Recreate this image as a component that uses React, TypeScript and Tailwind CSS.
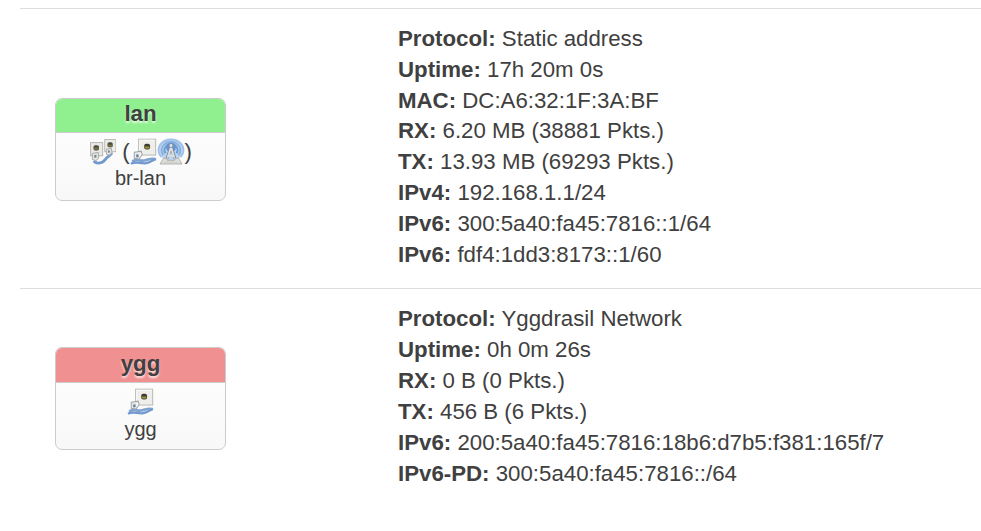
import type { ReactNode } from "react";

const iconClass = "inline-block h-[27.4px] w-[27.4px] shrink-0";

function BridgeIcon() {
  return (
    <svg className={iconClass} viewBox="0 0 27 27">
      <rect x="15.5" y="1.5" width="11" height="12" fill="#ecece8" stroke="#bcbcb8" />
      <rect x="1.5" y="4.5" width="12" height="13" fill="#e9e9e5" stroke="#b9b8b4" />
      <rect x="18.2" y="4.2" width="5.2" height="5" rx="1.6" fill="#4d4c40" />
      <rect x="18.8" y="6.6" width="4" height="1.8" fill="#7f773f" />
      <rect x="4.4" y="7.2" width="5.4" height="5" rx="1.6" fill="#4d4c40" />
      <rect x="5" y="9.6" width="4.2" height="1.8" fill="#7f773f" />
      <path d="M5.5 23.6 C10 26 14 24 16.2 21 C18.2 18.4 20 18 22 15.5" fill="none" stroke="#7199ce" strokeWidth="2.8" strokeLinecap="round" />
      <path d="M3.2 15.2 L9.2 14.2 L9.6 19.8 L6.8 22.4 L3.4 21.2 Z" fill="#e3e4e2" stroke="#a2a6a8" strokeWidth=".9" />
      <path d="M17 11 L22 10 L22.6 14.6 L20 17 L17.2 16 Z" fill="#e3e4e2" stroke="#a2a6a8" strokeWidth=".9" />
      <path d="M5 17 L7.3 16.5 L7.4 19.2 L5.4 19.8 Z M18.6 12.4 L20.5 12 L20.6 14.3 L19 14.8 Z" fill="#7b8896" />
    </svg>
  );
}

function EthernetIcon() {
  return (
    <svg className={iconClass} viewBox="0 0 27 27">
      <rect x="8.5" y="1.2" width="16.8" height="15.6" fill="#eeeeeb" stroke="#b9b9b5" />
      <path d="M9.5 15.8 V2.2 H24.3" fill="none" stroke="#fafaf7" />
      <rect x="14" y="5.6" width="5.8" height="5.8" rx="2" fill="#3d3d35" />
      <path d="M14.6 8.3 H19.2 V9.8 Q16.9 11.6 14.6 9.8 Z" fill="#9c8f3a" />
      <path d="M3 22.6 C7 20.8 9.5 22.6 14 22.2 C18 21.8 20 19.4 24.6 20.8" fill="none" stroke="#7fa3d1" strokeWidth="2.6" strokeLinecap="round" />
      <path d="M1 25.4 C6 22.4 10.5 25.8 16 24.8 C20.5 24 22 21.7 25 21.2" fill="none" stroke="#7199ce" strokeWidth="2.2" />
      <path d="M4.2 14 L10.9 13 L12 16.2 L8.9 20.8 L4.2 20 Z" fill="#e8e9e8" stroke="#a2a6a8" strokeWidth="1" />
      <path d="M5.9 16.6 L8.3 16.1 L8.5 18.7 L6.4 19.3 Z" fill="#5f83a8" />
      <path d="M9.2 15.2 L10.8 14.8 L11 16.9 L9.4 18.8 Z" fill="#fafaf7" />
    </svg>
  );
}

function WifiIcon() {
  return (
    <svg className={iconClass} viewBox="0 0 27 27">
      <ellipse cx="13.8" cy="11.2" rx="13" ry="11" fill="#bdd5f0" />
      <path d="M4.3 18.8 A12.4 10.4 0 1 1 23.3 18.8" fill="none" stroke="#9dc0e8" strokeWidth="1.5" />
      <path d="M6.3 17 A9.3 8.2 0 1 1 21.3 17" fill="none" stroke="#86aede" strokeWidth="1.8" />
      <path d="M8.3 15 A6.4 6 0 1 1 19.3 15" fill="none" stroke="#689ad6" strokeWidth="2" />
      <circle cx="13.8" cy="9.5" r="4.8" fill="#6495d3" />
      <path d="M13.8 8 L10 20 M13.8 8 L17.6 20" fill="none" stroke="#7d8c9b" strokeWidth="3" />
      <path d="M13.8 9 L10.4 19.5 M13.8 9 L17.2 19.5 M11.5 17.5 H16.2" fill="none" stroke="#e1e3e2" strokeWidth="1.7" />
      <circle cx="13.8" cy="7.4" r="2" fill="#dbe0e3" stroke="#71818d" strokeWidth=".7" />
      <path d="M6.5 20 L9.2 20 L10.2 22 L17.3 22 L18.3 20 L21.3 20 L24.6 25.6 H3 Z" fill="#dfdfdc" stroke="#aaaba9" strokeWidth=".9" />
      <path d="M7 23.8 H20.8" stroke="#cfcfcb" strokeWidth="1.2" />
    </svg>
  );
}

type Entry = [string, string];

function InterfaceBox({ name, device, tone, deviceTone, children }: { name: string; device: string; tone: string; deviceTone: string; children: ReactNode }) {
  return (
    <div className="ml-[35px] h-[103px] w-[171px] shrink-0 overflow-hidden rounded-[7px] border border-[#cccccc] bg-linear-to-b from-white to-[#f8f8f8] text-center">
      <div className={`border-b border-[#cccccc] text-[22.3px] font-bold [text-shadow:0_2px_2px_rgba(255,255,255,0.75)] ${tone}`}>{name}</div>
      <div className="flex h-[32px] items-end justify-center text-[22.3px] leading-[27px]">{children}</div>
      <div className={`text-[20px] leading-[27px] ${deviceTone}`}>{device}</div>
    </div>
  );
}

function Details({ entries }: { entries: Entry[] }) {
  return (
    <div className="text-[22.25px] leading-[30.83px]">
      {entries.map(([label, value]) => (
        <div key={label + value}><strong>{label}:</strong> {value}</div>
      ))}
    </div>
  );
}

export default function App() {
  return (
    <main className="h-[531px] overflow-hidden bg-white pt-2 pl-5 font-['Liberation_Sans',Arial,sans-serif] text-[#404040]">
      <section className="flex h-[280px] border-t border-[#dddddd] pt-[15px]">
        <div className="w-[378px] shrink-0 pt-[74px]">
          <InterfaceBox name="lan" device="br-lan" tone="h-[34px] leading-[29px] bg-[#90f090]" deviceTone="pt-0">
            <BridgeIcon />
            <span className="ml-[6px]">(</span>
            <EthernetIcon />
            <WifiIcon />
            <span>)</span>
          </InterfaceBox>
        </div>
        <Details entries={[
          ["Protocol", "Static address"],
          ["Uptime", "17h 20m 0s"],
          ["MAC", "DC:A6:32:1F:3A:BF"],
          ["RX", "6.20 MB (38881 Pkts.)"],
          ["TX", "13.93 MB (69293 Pkts.)"],
          ["IPv4", "192.168.1.1/24"],
          ["IPv6", "300:5a40:fa45:7816::1/64"],
          ["IPv6", "fdf4:1dd3:8173::1/60"],
        ]} />
      </section>
      <section className="flex border-t border-[#dddddd] pt-[15.4px]">
        <div className="w-[378px] shrink-0 pt-[42.6px]">
          <InterfaceBox name="ygg" device="ygg" tone="h-[35px] leading-[31px] bg-[#f09090]" deviceTone="pt-px">
            <EthernetIcon />
          </InterfaceBox>
        </div>
        <Details entries={[
          ["Protocol", "Yggdrasil Network"],
          ["Uptime", "0h 0m 26s"],
          ["RX", "0 B (0 Pkts.)"],
          ["TX", "456 B (6 Pkts.)"],
          ["IPv6", "200:5a40:fa45:7816:18b6:d7b5:f381:165f/7"],
          ["IPv6-PD", "300:5a40:fa45:7816::/64"],
        ]} />
      </section>
    </main>
  );
}
